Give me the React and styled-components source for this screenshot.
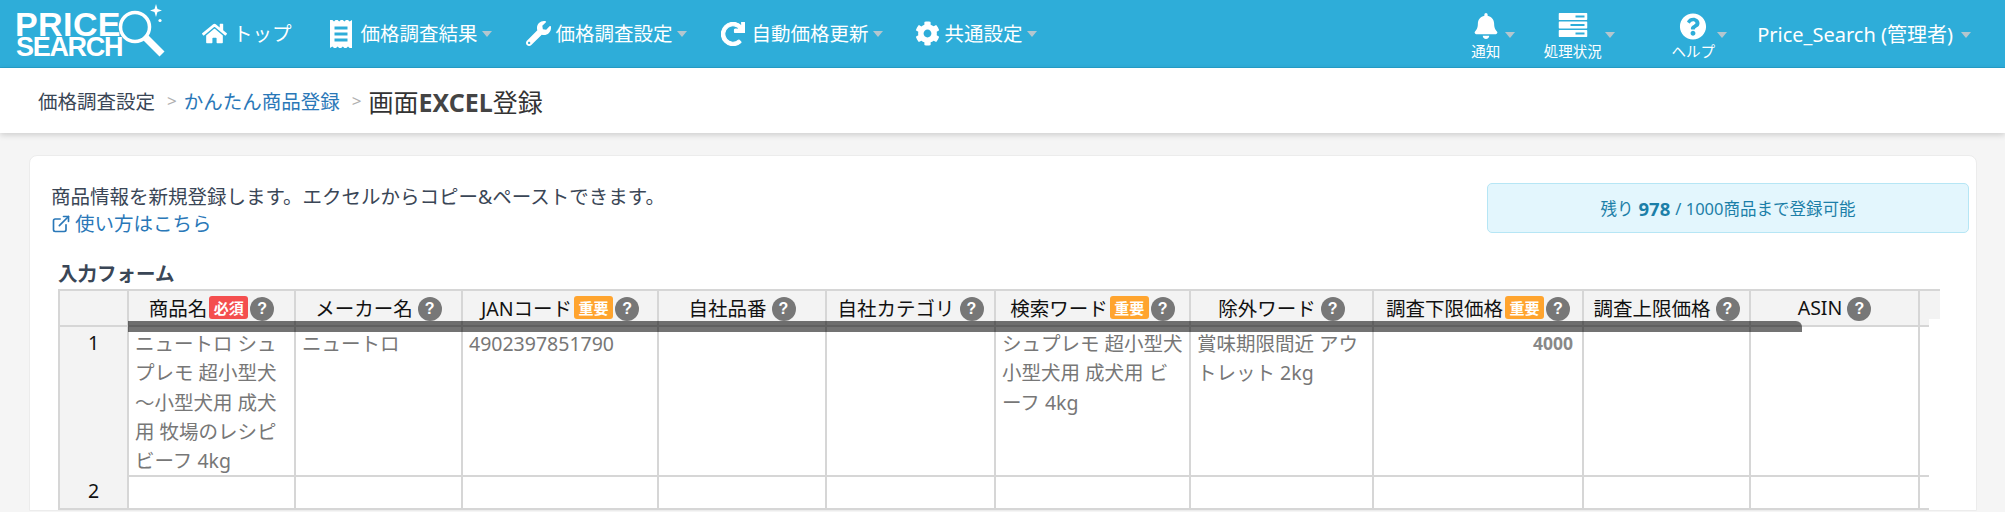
import React from 'react';
import styled, { createGlobalStyle } from 'styled-components';
import { FaHome, FaWrench, FaRedo, FaCog, FaBell, FaQuestionCircle } from 'react-icons/fa';
import { FiExternalLink } from 'react-icons/fi';

const GlobalStyle = createGlobalStyle`
  html, body {
    margin: 0;
    height: 512px;
    overflow: hidden;
    background: #f5f5f5;
    font-family: "Noto Sans", "Noto Sans CJK JP", sans-serif;
    font-size: 19.5px;
    color: #3a4656;
  }
  #root {
    height: 512px;
    overflow: hidden;
  }
`;

const Nav = styled.header`
  height: 67px;
  display: flex;
  align-items: center;
  background: #2eadd9;
  border-bottom: 1px solid #259fcb;
  color: #fff;
  padding-right: 34px;
`;

const Logo = styled.div`
  position: relative;
  width: 202px;
  height: 67px;
  flex: none;
`;

const LogoBig = styled.span`
  position: absolute;
  left: 15px;
  top: 11px;
  font: bold 34px/26px "Liberation Sans", sans-serif;
  letter-spacing: 0.4px;
`;

const LogoSmall = styled.span`
  position: absolute;
  left: 16px;
  top: 37px;
  font: bold 27px/21px "Liberation Sans", sans-serif;
  letter-spacing: -1.3px;
`;

const LogoGlass = styled.svg`
  position: absolute;
  left: 110px;
  top: 2px;
`;

const Menu = styled.nav`
  display: flex;
  align-items: center;
  gap: 34px;
`;

const MenuItem = styled.a`
  display: flex;
  align-items: center;
  gap: ${(p) => p.$gap || 6}px;
  margin-left: ${(p) => p.$shift || 0}px;
  white-space: nowrap;
  svg {
    flex: none;
  }
`;

const MenuLabel = styled.span`
  display: flex;
  align-items: center;
  gap: 4px;
  margin-top: -2px;
`;

const Caret = styled.i`
  display: inline-block;
  width: 0;
  height: 0;
  margin-top: 2px;
  border-left: 5.5px solid transparent;
  border-right: 5.5px solid transparent;
  border-top: 6px solid #b4c6ce;
`;

const RightMenu = styled.div`
  margin-left: auto;
  display: flex;
  align-items: center;
`;

const StackItem = styled.a`
  position: relative;
  display: flex;
  flex-direction: column;
  align-items: center;
  height: 67px;
  justify-content: flex-end;
  width: ${(p) => p.$width}px;
  margin-right: ${(p) => p.$after}px;
  white-space: nowrap;
`;

const StackIcon = styled.span`
  position: absolute;
  top: 13px;
  left: 50%;
  transform: translateX(-50%);
  display: flex;
`;

const StackCaret = styled(Caret)`
  position: absolute;
  top: 30px;
  left: ${(p) => p.$left}px;
`;

const StackLabel = styled.span`
  font-size: 14.5px;
  line-height: 20px;
  padding-bottom: 6px;
`;

const UserName = styled.a`
  display: flex;
  align-items: center;
  gap: 8px;
  font-size: 20px;
  white-space: nowrap;
`;

const Crumbs = styled.div`
  height: 65px;
  display: flex;
  align-items: center;
  padding-left: 38px;
  background: #fff;
  box-shadow: 0 2px 6px rgba(0, 0, 0, 0.16);
  white-space: nowrap;
`;

const Crumb = styled.span`
  color: #3a4656;
`;

const CrumbLink = styled.a`
  color: #2a78b8;
`;

const CrumbSep = styled.span`
  color: #b0b0b0;
  margin: 0 7px 0 12px;
  font-size: 17px;
`;

const CrumbTitle = styled.h1`
  margin: 0;
  font-size: 25px;
  font-weight: 400;
  color: #333;
  b {
    font-weight: 700;
    color: #444;
  }
`;

const Card = styled.section`
  margin: 22px 28px 0 29px;
  padding: 27px 7px 0 21px;
  background: #fff;
  border: 1px solid #ececec;
  border-radius: 8px 8px 0 0;
`;

const IntroRow = styled.div`
  display: flex;
  justify-content: space-between;
  align-items: flex-start;
`;

const Intro = styled.div`
  line-height: 27px;
`;

const HelpLink = styled.a`
  display: flex;
  align-items: center;
  gap: 4px;
  color: #2a78b8;
`;

const Quota = styled.div`
  box-sizing: border-box;
  width: 482px;
  height: 50px;
  display: flex;
  align-items: center;
  justify-content: center;
  gap: 5px;
  background: #e3f6fd;
  border: 1.5px solid #b6e6f5;
  border-radius: 5px;
  color: #1c7fa8;
  font-size: 16.5px;
  b {
    font-size: 18.5px;
  }
`;

const FormBlock = styled.div`
  margin: 24px 0 0 7px;
`;

const FormTitle = styled.h2`
  margin: 0 0 2px;
  font-size: 19.5px;
  line-height: 26px;
  font-weight: 700;
  color: #3a4656;
`;

const Sheet = styled.div`
  position: relative;
  width: 1882px;
`;

const Row = styled.div`
  display: grid;
  grid-template-columns: 71px 167px 167px 196px 168px 169px 195px 183px 210px 167px 169px ${(p) => p.$tail}px;
  height: ${(p) => p.$height}px;
`;

const HeadCell = styled.div`
  box-sizing: border-box;
  display: flex;
  align-items: center;
  justify-content: center;
  gap: ${(p) => p.$gap ?? 5}px;
  background: #f3f3f3;
  border-top: 2px solid #d6d6d6;
  border-right: 2px solid #d6d6d6;
  border-bottom: 2px solid #d6d6d6;
  color: #111;
  white-space: nowrap;
  padding-bottom: 2px;
  &:first-child {
    border-left: 2px solid #d6d6d6;
  }
`;

const HeadTail = styled.div`
  position: relative;
  background: #f3f3f3;
  border-top: 2px solid #d6d6d6;
  border-bottom: 2px solid #d6d6d6;
  &::after {
    content: '';
    position: absolute;
    right: 0;
    bottom: -2px;
    width: 11px;
    height: 8px;
    background: #fff;
  }
`;

const NumCell = styled.div`
  box-sizing: border-box;
  padding-top: 1px;
  text-align: center;
  background: #f3f3f3;
  border-left: 2px solid #d6d6d6;
  border-right: 2px solid #d6d6d6;
  border-bottom: 2px solid #d6d6d6;
  color: #111;
  line-height: 30px;
`;

const Cell = styled.div`
  box-sizing: border-box;
  padding: 2px 6px 0 6px;
  border-right: 2px solid #d6d6d6;
  border-bottom: 2px solid #d6d6d6;
  color: #777;
  line-height: 29.3px;
  word-break: break-all;
`;

const NumberCell = styled(Cell)`
  text-align: right;
  font-weight: 700;
  font-size: 17.5px;
  color: #888;
  padding-right: 9px;
`;

const TailCell = styled.div`
  border-bottom: 2px solid #d6d6d6;
`;

const Badge = styled.span`
  flex: none;
  width: 39px;
  height: 23px;
  margin-top: 1px;
  display: flex;
  align-items: center;
  justify-content: center;
  border-radius: 3px;
  background: ${(p) => (p.$kind === 'must' ? '#f44e4e' : '#ffa42e')};
  color: #fff;
  font-size: 15px;
  font-weight: 700;
`;

const Hint = styled.span`
  flex: none;
  width: 24px;
  height: 24px;
  margin-top: 3px;
  border-radius: 50%;
  display: flex;
  align-items: center;
  justify-content: center;
  background: #777;
  color: #fff;
  font: bold 16px/1 "Liberation Sans", sans-serif;
`;

const Scrollbar = styled.div`
  position: absolute;
  left: 70px;
  top: 32px;
  width: 1674px;
  height: 11px;
  background: rgba(0, 0, 0, 0.55);
  border-radius: 0 6px 0 0;
`;

const LogoMark = () => (
  <LogoGlass width="60" height="60" viewBox="0 0 60 60">
    <circle cx="25" cy="25" r="14.5" fill="none" stroke="#fff" strokeWidth="3.5" />
    <path d="M36 36 L52 52" stroke="#fff" strokeWidth="7" />
    <path d="M46 2 L47.500 7 L52 8.500 L47.500 10 L46 15 L44.500 10 L40 8.500 L44.500 7 Z" fill="#fff" />
    <circle cx="50" cy="18.500" r="1.600" fill="#fff" />
  </LogoGlass>
);

// ギザギザのレシート型アイコン
const ListIcon = () => (
  <svg width="22" height="28" viewBox="0 0 22 28">
    <path
      fill="#fff"
      fillRule="evenodd"
      d="M0 0h2.400l1.600 1.400L5.600 0h2l1.600 1.400L10.800 0h2l1.600 1.400L16 0h2l1.600 1.400L22 0v28h-2.400L18 26.600 16.400 28h-2l-1.600-1.400-1.600 1.400h-2l-1.600-1.400L6 28H4l-1.600-1.400L0 28Z M4.500 6.500v3h13v-3Z M4.500 12.500v3h13v-3Z M4.500 18.500v3h13v-3Z"
    />
  </svg>
);

const ServerIcon = () => (
  <svg width="29" height="24" viewBox="0 0 29 24">
    <path
      fill="#fff"
      fillRule="evenodd"
      d="M1 0h27a1 1 0 0 1 1 1v5a1 1 0 0 1-1 1H1a1 1 0 0 1-1-1V1a1 1 0 0 1 1-1Z M17 2.500v2h9v-2Z M1 8.500h27a1 1 0 0 1 1 1v5a1 1 0 0 1-1 1H1a1 1 0 0 1-1-1v-5a1 1 0 0 1 1-1Z M12 11v2h14v-2Z M1 17h27a1 1 0 0 1 1 1v5a1 1 0 0 1-1 1H1a1 1 0 0 1-1-1v-5a1 1 0 0 1 1-1Z M17 19.500v2h9v-2Z"
    />
  </svg>
);

const columns = [
  { label: '商品名', badge: 'must' },
  { label: 'メーカー名' },
  { label: 'JANコード', badge: 'important' },
  { label: '自社品番' },
  { label: '自社カテゴリ' },
  { label: '検索ワード', badge: 'important' },
  { label: '除外ワード' },
  { label: '調査下限価格', badge: 'important' },
  { label: '調査上限価格' },
  { label: 'ASIN' },
];

export default function App() {
  return (
    <>
      <GlobalStyle />
      <Nav>
        <Logo>
          <LogoBig>PRICE</LogoBig>
          <LogoSmall>SEARCH</LogoSmall>
          <LogoMark />
        </Logo>
        <Menu>
          <MenuItem $gap={6}>
            <FaHome size={25} />
            <MenuLabel>トップ</MenuLabel>
          </MenuItem>
          <MenuItem $gap={9} $shift={4}>
            <ListIcon />
            <MenuLabel>
              価格調査結果
              <Caret />
            </MenuLabel>
          </MenuItem>
          <MenuItem $gap={5}>
            <FaWrench size={25} />
            <MenuLabel>
              価格調査設定
              <Caret />
            </MenuLabel>
          </MenuItem>
          <MenuItem $gap={7}>
            <FaRedo size={24} stroke="currentColor" strokeWidth={24} />
            <MenuLabel>
              自動価格更新
              <Caret />
            </MenuLabel>
          </MenuItem>
          <MenuItem $gap={5} $shift={-2}>
            <FaCog size={25} />
            <MenuLabel>
              共通設定
              <Caret />
            </MenuLabel>
          </MenuItem>
        </Menu>
        <RightMenu>
          <StackItem $width={29} $after={43}>
            <StackIcon>
              <FaBell size={26} />
            </StackIcon>
            <StackCaret $left={34} />
            <StackLabel>通知</StackLabel>
          </StackItem>
          <StackItem $width={59} $after={70}>
            <StackIcon>
              <ServerIcon />
            </StackIcon>
            <StackCaret $left={62} />
            <StackLabel>処理状況</StackLabel>
          </StackItem>
          <StackItem $width={42} $after={43}>
            <StackIcon>
              <FaQuestionCircle size={27} />
            </StackIcon>
            <StackCaret $left={45} />
            <StackLabel>ヘルプ</StackLabel>
          </StackItem>
          <UserName>
            Price_Search (管理者)
            <Caret />
          </UserName>
        </RightMenu>
      </Nav>
      <Crumbs>
        <Crumb>価格調査設定</Crumb>
        <CrumbSep>&gt;</CrumbSep>
        <CrumbLink>かんたん商品登録</CrumbLink>
        <CrumbSep>&gt;</CrumbSep>
        <CrumbTitle>
          画面<b>EXCEL</b>登録
        </CrumbTitle>
      </Crumbs>
      <Card>
        <IntroRow>
          <Intro>
            <div>商品情報を新規登録します。エクセルからコピー&amp;ペーストできます。</div>
            <HelpLink>
              <FiExternalLink size={20} />
              使い方はこちら
            </HelpLink>
          </Intro>
          <Quota>
            残り <b>978</b> / 1000商品まで登録可能
          </Quota>
        </IntroRow>
        <FormBlock>
          <FormTitle>入力フォーム</FormTitle>
          <Sheet>
            <Row $height={38} $tail={20}>
              <HeadCell />
              {columns.map((col) => (
                <HeadCell key={col.label} $gap={col.badge ? 2 : 5}>
                  {col.label}
                  {col.badge && (
                    <Badge $kind={col.badge}>{col.badge === 'must' ? '必須' : '重要'}</Badge>
                  )}
                  <Hint>?</Hint>
                </HeadCell>
              ))}
              <HeadTail />
            </Row>
            <Row $height={148} $tail={9}>
              <NumCell>1</NumCell>
              <Cell>ニュートロ シュプレモ 超小型犬～小型犬用 成犬用 牧場のレシピ ビーフ 4kg</Cell>
              <Cell>ニュートロ</Cell>
              <Cell>4902397851790</Cell>
              <Cell />
              <Cell />
              <Cell>シュプレモ 超小型犬 小型犬用 成犬用 ビーフ 4kg</Cell>
              <Cell>賞味期限間近 アウトレット 2kg</Cell>
              <NumberCell>4000</NumberCell>
              <Cell />
              <Cell />
              <TailCell />
            </Row>
            <Row $height={35} $tail={9}>
              <NumCell>2</NumCell>
              <Cell />
              <Cell />
              <Cell />
              <Cell />
              <Cell />
              <Cell />
              <Cell />
              <Cell />
              <Cell />
              <Cell />
              <TailCell />
            </Row>
            <Scrollbar />
          </Sheet>
        </FormBlock>
      </Card>
    </>
  );
}
